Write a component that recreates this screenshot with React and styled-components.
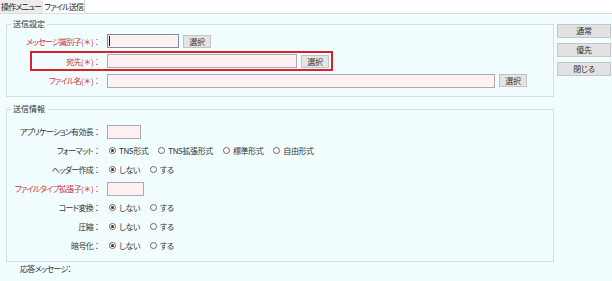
import React from 'react';
import styled, { createGlobalStyle } from 'styled-components';

const Global = createGlobalStyle`
  html, body { margin: 0; padding: 0; background: #f2fdff; }
  body {
    font-family: "Noto Sans CJK JP", "Noto Sans", sans-serif;
    font-size: 8px;
    color: #333;
    font-feature-settings: "palt" 1;
  }
  * { box-sizing: border-box; }
`;

const Page = styled.div`
  width: 612px;
  height: 281px;
  overflow: hidden;
  background: #f2fdff;
`;

const TabBar = styled.div`
  display: flex;
  height: 14px;
  background: #ffffff;
  border-bottom: 1px solid #dcdcdc;
`;

const Tab = styled.div`
  padding: 0 1px;
  line-height: 13px;
  font-size: 8px;
  letter-spacing: -0.8px;
  color: #222;
  background: ${p => (p.$active ? '#ffffff' : '#ececec')};
  border-right: 1px solid ${p => (p.$active ? '#d0d0d0' : '#e4e4e4')};
`;

const Body = styled.div`
  display: flex;
  gap: 3px;
  padding: 5px 1px 0 6px;
`;

const Main = styled.div`
  width: 548px;
  display: flex;
  flex-direction: column;
`;

const Side = styled.div`
  width: 54px;
  display: flex;
  flex-direction: column;
  gap: 5px;
  padding-top: 5px;
`;

const SideButton = styled.button`
  width: 54px;
  height: 14px;
  padding: 0;
  border: 1px solid #c6c6c6;
  background: #e2e2e2;
  font: inherit;
  letter-spacing: -0.3px;
  color: #333;
  line-height: 12px;
`;

const Group = styled.fieldset`
  margin: ${p => p.$mt || 0}px 0 0 0;
  padding: ${p => p.$pt}px 0 ${p => p.$pb}px 0;
  border: 1px solid #d6dfdf;
  min-width: 0;
`;

const Legend = styled.legend`
  margin-left: 4px;
  padding: 0 2px;
  line-height: 10px;
  font-size: 8px;
  color: #333;
`;

const Row = styled.div`
  display: flex;
  align-items: center;
  height: ${p => p.$h || 20}px;
`;

const Label = styled.div`
  width: ${p => p.$w || 94}px;
  flex-shrink: 0;
  text-align: right;
  white-space: nowrap;
  letter-spacing: -0.7px;
  color: ${p => (p.$req ? '#c8323a' : '#333')};
`;

const Colon = styled.span`
  font-feature-settings: normal;
  letter-spacing: 0;
`;

const FieldWrap = styled.div`
  position: relative;
  display: flex;
  margin-left: 6px;
`;

const TextInput = styled.input`
  width: ${p => p.$w}px;
  height: 14px;
  margin: 0;
  padding: 0 2px;
  border: 1px solid ${p => (p.$focus ? '#7f8c99' : '#ababab')};
  background: #fff0f4;
  font: inherit;
  outline: none;
`;

const Caret = styled.span`
  position: absolute;
  left: 2px;
  top: 2px;
  width: 1px;
  height: 10px;
  background: #111;
`;

const SelectButton = styled.button`
  margin-left: 4px;
  width: 28px;
  height: 13px;
  padding: 0;
  border: 1px solid #c4c4c4;
  background: #e4e4e4;
  font: inherit;
  letter-spacing: -0.3px;
  color: #333;
  line-height: 11px;
`;

const Highlight = styled.div`
  display: flex;
  align-items: center;
  width: fit-content;
  margin-left: 23px;
  height: 20px;
  padding-right: 2px;
  border: 2px solid #d9222b;
`;

const RadioGroup = styled.div`
  display: flex;
  align-items: center;
  gap: 10px;
  margin-left: 8px;
`;

const Option = styled.label`
  display: flex;
  align-items: center;
  gap: 3px;
  white-space: nowrap;
  letter-spacing: -0.4px;
`;

const RadioMark = styled.span`
  width: 7px;
  height: 7px;
  border-radius: 50%;
  border: 1px solid #666;
  background: #fff;
  display: inline-flex;
  align-items: center;
  justify-content: center;
  &::after {
    content: '';
    width: 3px;
    height: 3px;
    border-radius: 50%;
    background: ${p => (p.$on ? '#333' : 'transparent')};
  }
`;

const Response = styled.div`
  padding-left: 14px;
  margin-top: 2px;
  line-height: 10px;
  letter-spacing: -0.7px;
`;

const Radios = ({ options, value }) => (
  <RadioGroup>
    {options.map(o => (
      <Option key={o}>
        <RadioMark $on={o === value} />
        {o}
      </Option>
    ))}
  </RadioGroup>
);

const FieldLabel = ({ children, ...rest }) => (
  <Label {...rest}>
    {children}
    <Colon>：</Colon>
  </Label>
);

const YesNo = ['しない', 'する'];

export default function App() {
  return (
    <Page>
      <Global />
      <TabBar>
        <Tab>操作メニュー</Tab>
        <Tab $active>ファイル送信</Tab>
      </TabBar>
      <Body>
        <Main>
          <Group $pt={2} $pb={6}>
            <Legend>送信設定</Legend>
            <Row>
              <FieldLabel $req>メッセージ識別子( ＊ )</FieldLabel>
              <FieldWrap>
                <TextInput $w={72} $focus />
                <Caret />
              </FieldWrap>
              <SelectButton>選択</SelectButton>
            </Row>
            <Highlight>
              <FieldLabel $req $w={69}>宛先( ＊ )</FieldLabel>
              <FieldWrap>
                <TextInput $w={190} />
              </FieldWrap>
              <SelectButton>選択</SelectButton>
            </Highlight>
            <Row $h={19}>
              <FieldLabel $req>ファイル名( ＊ )</FieldLabel>
              <FieldWrap>
                <TextInput $w={388} />
              </FieldWrap>
              <SelectButton>選択</SelectButton>
            </Row>
          </Group>
          <Group $mt={7} $pt={8} $pb={6}>
            <Legend>送信情報</Legend>
            <Row $h={19}>
              <FieldLabel>アプリケーション有効長</FieldLabel>
              <FieldWrap>
                <TextInput $w={34} />
              </FieldWrap>
            </Row>
            <Row $h={19}>
              <FieldLabel>フォーマット</FieldLabel>
              <Radios options={['TNS形式', 'TNS拡張形式', '標準形式', '自由形式']} value="TNS形式" />
            </Row>
            <Row $h={19}>
              <FieldLabel>ヘッダー作成</FieldLabel>
              <Radios options={YesNo} value="しない" />
            </Row>
            <Row $h={19}>
              <FieldLabel $req>ファイルタイプ拡張子( ＊ )</FieldLabel>
              <FieldWrap>
                <TextInput $w={37} />
              </FieldWrap>
            </Row>
            <Row $h={19}>
              <FieldLabel>コード変換</FieldLabel>
              <Radios options={YesNo} value="しない" />
            </Row>
            <Row $h={19}>
              <FieldLabel>圧縮</FieldLabel>
              <Radios options={YesNo} value="しない" />
            </Row>
            <Row $h={19}>
              <FieldLabel>暗号化</FieldLabel>
              <Radios options={YesNo} value="しない" />
            </Row>
          </Group>
          <Response>応答メッセージ：</Response>
        </Main>
        <Side>
          <SideButton>通常</SideButton>
          <SideButton>優先</SideButton>
          <SideButton>閉じる</SideButton>
        </Side>
      </Body>
    </Page>
  );
}
